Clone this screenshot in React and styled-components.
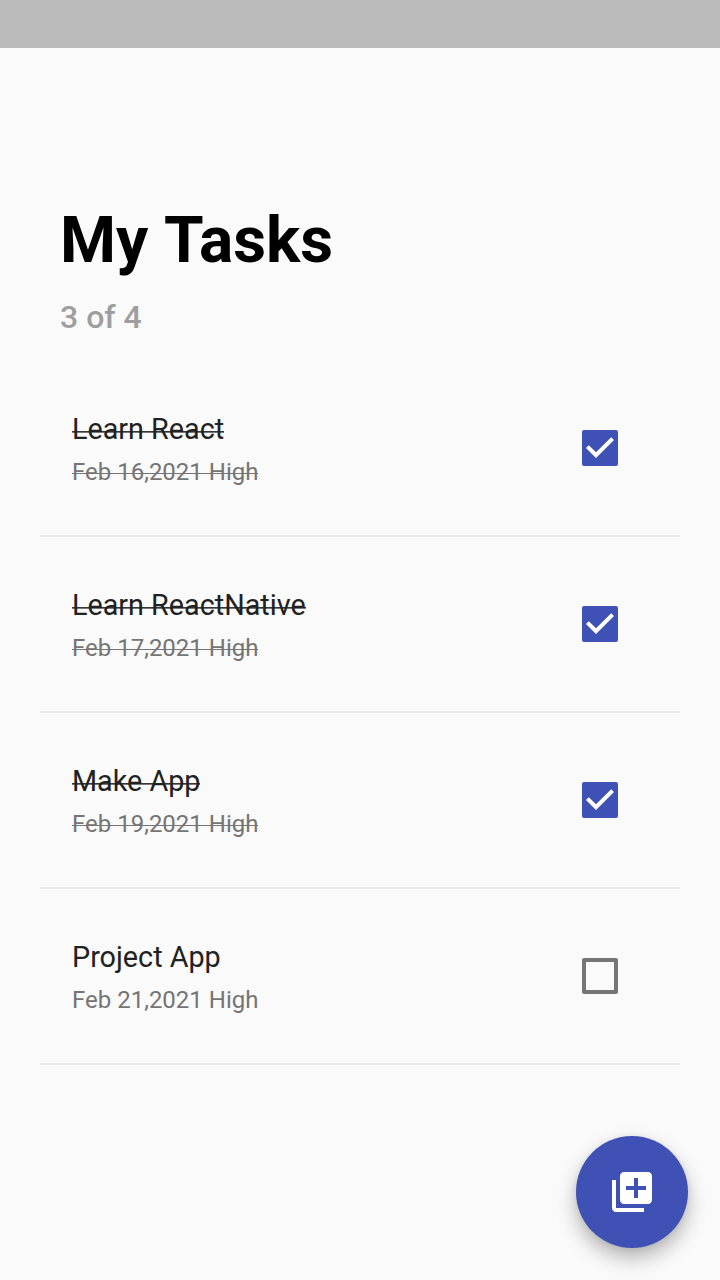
import React, { useState } from "react";
import styled, { createGlobalStyle } from "styled-components";

const GlobalStyle = createGlobalStyle`
  *, *::before, *::after { box-sizing: border-box; }
  body {
    margin: 0;
    background: #fafafa;
    font-family: Roboto, "Liberation Sans", sans-serif;
  }
`;

const Screen = styled.div`
  position: relative;
  display: flex;
  flex-direction: column;
  height: 1280px;
  background: #fafafa;
`;

const StatusBar = styled.div`
  height: 48px;
  flex: none;
  background: #bbbbbb;
`;

const Header = styled.header`
  padding: 155px 60px 0;
`;

const Title = styled.h1`
  margin: 0;
  font-size: 64px;
  line-height: 76px;
  font-weight: 700;
  word-spacing: 1.5px;
  color: #000;
`;

const Counter = styled.p`
  margin: 19px 0 0;
  font-size: 32px;
  line-height: 38px;
  font-weight: 500;
  color: #9e9e9e;
`;

const TaskList = styled.ul`
  list-style: none;
  margin: 25px 40px 0;
  padding: 0;
`;

const TaskRow = styled.li`
  display: flex;
  justify-content: space-between;
  align-items: flex-start;
  height: 176px;
  padding: 48px 62px 0 32px;
  border-bottom: 2px solid #eaeaea;
`;

const TaskText = styled.div`
  display: flex;
  flex-direction: column;
  align-items: flex-start;
`;

/* A line of text with its own strike rule, set a little below the font's default. */
const TextLine = styled.div`
  position: relative;

  &::after {
    content: "";
    display: ${(p) => (p.$done ? "block" : "none")};
    position: absolute;
    left: 0;
    right: 0;
  }
`;

const TaskName = styled(TextLine)`
  font-size: 28.75px;
  line-height: 40px;
  color: #212121;

  &::after {
    top: 22px;
    height: 2px;
    background: linear-gradient(rgba(33, 33, 33, 0.9) 50%, rgba(33, 33, 33, 0.6) 50%);
  }
`;

const TaskMeta = styled(TextLine)`
  margin-top: 5px;
  font-size: 24px;
  line-height: 36px;
  color: #757575;

  &::after {
    top: 19px;
    height: 1px;
    background: #757575;
  }
`;

const CheckButton = styled.button`
  display: block;
  width: 36px;
  height: 36px;
  margin-top: 21px;
  padding: 0;
  border: ${(p) => (p.$done ? "0" : "4px solid #757575")};
  border-radius: 2px;
  background: ${(p) => (p.$done ? "#3f51b5" : "transparent")};
`;

const CheckMark = styled.svg`
  display: block;
  width: 36px;
  height: 36px;
  fill: #fff;
`;

const Fab = styled.button`
  position: absolute;
  right: 32px;
  bottom: 32px;
  display: flex;
  align-items: center;
  justify-content: center;
  width: 112px;
  height: 112px;
  padding: 0;
  border: 0;
  border-radius: 50%;
  background: #3f51b5;
  box-shadow: 0 10px 20px rgba(0, 0, 0, 0.28), 0 1px 6px rgba(0, 0, 0, 0.08);
`;

const FabIcon = styled.svg`
  width: 48px;
  height: 48px;
  fill: #fff;
`;

const initialTasks = [
  { name: "Learn React", date: "Feb 16,2021", priority: "High", done: true },
  { name: "Learn ReactNative", date: "Feb 17,2021", priority: "High", done: true },
  { name: "Make App", date: "Feb 19,2021", priority: "High", done: true },
  { name: "Project App", date: "Feb 21,2021", priority: "High", done: false },
];

function Task({ task, onToggle }) {
  return (
    <TaskRow>
      <TaskText>
        <TaskName $done={task.done}>{task.name}</TaskName>
        <TaskMeta $done={task.done}>{`${task.date} ${task.priority}`}</TaskMeta>
      </TaskText>
      <CheckButton $done={task.done} onClick={onToggle} role="checkbox" aria-checked={task.done}>
        {task.done && (
          <CheckMark viewBox="3 3 18 18">
            <path d="M10 17l-5-5 1.410-1.410L10 14.170l7.590-7.590L19 8l-9 9z" />
          </CheckMark>
        )}
      </CheckButton>
    </TaskRow>
  );
}

export default function App() {
  const [tasks, setTasks] = useState(initialTasks);
  const toggle = (index) =>
    setTasks((all) => all.map((t, i) => (i === index ? { ...t, done: !t.done } : t)));
  const doneCount = tasks.filter((t) => t.done).length;

  return (
    <Screen>
      <GlobalStyle />
      <StatusBar />
      <Header>
        <Title>My Tasks</Title>
        <Counter>{`${doneCount} of ${tasks.length}`}</Counter>
      </Header>
      <TaskList>
        {tasks.map((task, i) => (
          <Task key={task.name} task={task} onToggle={() => toggle(i)} />
        ))}
      </TaskList>
      <Fab>
        <FabIcon viewBox="0 0 24 24">
          <path d="M4 6H2v14c0 1.100.9 2 2 2h14v-2H4V6zm16-4H8c-1.100 0-2 .9-2 2v12c0 1.100.9 2 2 2h12c1.100 0 2-.9 2-2V4c0-1.100-.9-2-2-2zm-1 9h-4v4h-2v-4H9V9h4V5h2v4h4v2z" />
        </FabIcon>
      </Fab>
    </Screen>
  );
}
